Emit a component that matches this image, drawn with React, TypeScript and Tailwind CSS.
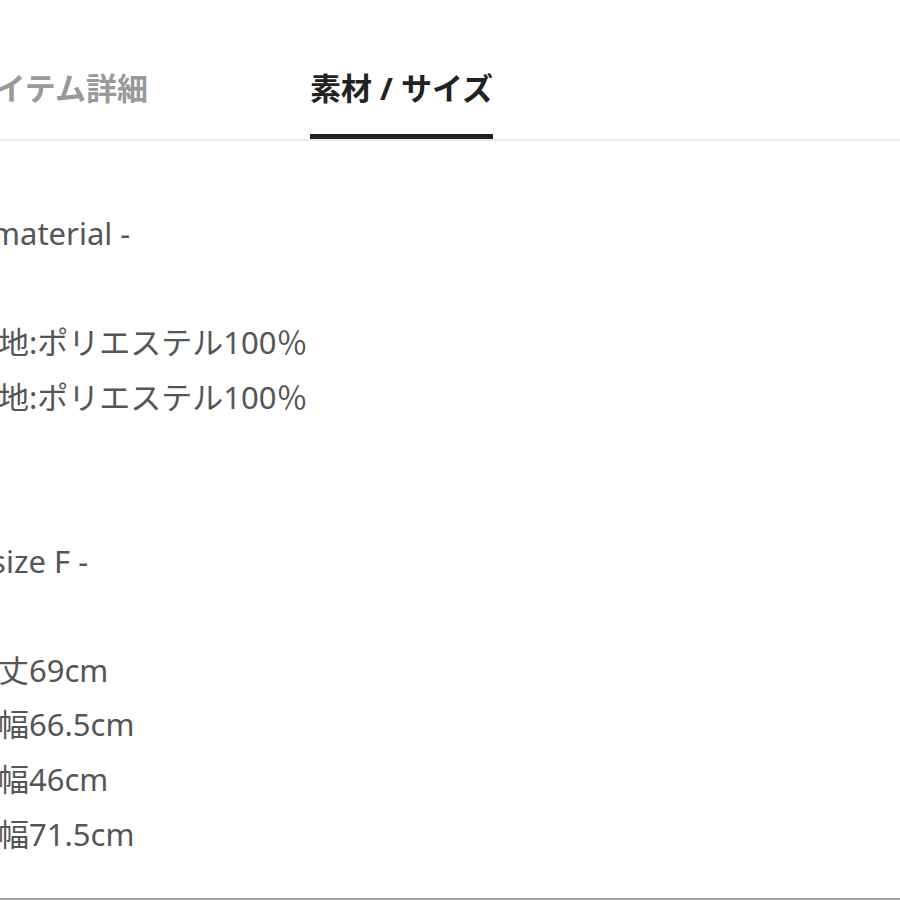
const lines: string[] = [
  '- material -',
  '',
  '表地:ポリエステル100％',
  '裏地:ポリエステル100％',
  '',
  '',
  '- size F -',
  '',
  '着丈69cm',
  '身幅66.5cm',
  '肩幅46cm',
  '袖幅71.5cm',
];

export default function App() {
  return (
    <div
      className="relative h-[900px] w-[900px] overflow-hidden bg-white"
      style={{ fontFamily: '"Noto Sans", "Noto Sans CJK JP", sans-serif' }}
    >
      {/* tabs */}
      <div className="flex h-[139px] items-end gap-[162px] -ml-[35px]">
        <div className="flex flex-col">
          <span className="text-[31px] leading-[31px] font-bold text-[#999999]">アイテム詳細</span>
          <div className="mt-[30px] h-[5px]" />
        </div>
        <div className="flex flex-col">
          <span className="text-[31px] leading-[31px] font-bold text-[#222222]">素材 / サイズ</span>
          <div className="mt-[30px] h-[5px] bg-[#222222]" />
        </div>
      </div>
      <div className="h-[2px] bg-[#ececec]" />

      {/* body */}
      <div className="pt-[65px] text-[31px] leading-[54.6px] text-[#555555]">
        {lines.map((line, i) => {
          const isLabel = line.startsWith('-');
          return (
            <div
              key={i}
              className={`whitespace-pre ${isLabel ? '-ml-[27px]' : '-ml-[33px]'}`}
            >
              {line || '\u00a0'}
            </div>
          );
        })}
      </div>

      <div className="absolute bottom-0 left-0 right-0 h-[2px] bg-[#a3a3a3]" />
    </div>
  );
}
